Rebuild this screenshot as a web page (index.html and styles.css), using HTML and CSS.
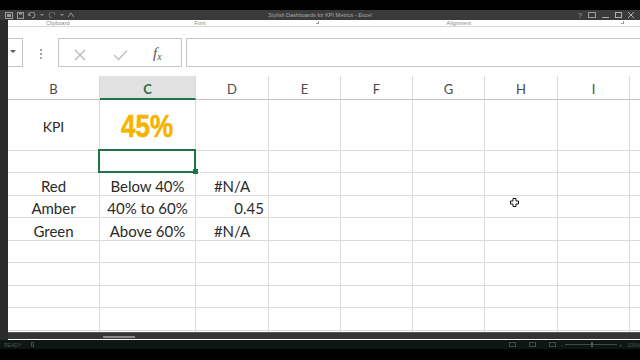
FILE: index.html
```html
<!DOCTYPE html>
<html lang="en">
<head>
    <meta charset="UTF-8">
    <meta name="viewport" content="width=device-width, initial-scale=1.0">
    <title>Stylish Dashboards for KPI Metrics - Excel</title>
    <link rel="stylesheet" href="styles.css">
</head>
<body>
    <div class="top-black"></div>

    <div class="titlebar">
        <div class="qat">
            <svg width="8" height="7" viewBox="0 0 8 7"><rect x="0.5" y="0.5" width="7" height="6" fill="none" stroke="#9a9a9a"/><rect x="2" y="2" width="4" height="3" fill="#9a9a9a"/></svg>
            <svg width="7" height="7" viewBox="0 0 7 7"><rect x="0.5" y="0.5" width="6" height="6" fill="none" stroke="#9a9a9a"/><rect x="2" y="0.5" width="3" height="2" fill="#9a9a9a"/></svg>
            <svg width="8" height="7" viewBox="0 0 8 7"><path d="M1 3 A3 3 0 1 1 4 6" fill="none" stroke="#9a9a9a"/><path d="M0 1 L1 4 L3 3" fill="none" stroke="#9a9a9a"/></svg>
            <span class="qat-caret"></span>
            <svg width="8" height="7" viewBox="0 0 8 7"><path d="M7 3 A3 3 0 1 0 4 6" fill="none" stroke="#6e6e6e"/></svg>
            <span class="qat-caret"></span>
            <svg width="6" height="7" viewBox="0 0 6 7"><path d="M0 5 L3 1 L6 5" fill="none" stroke="#9a9a9a"/></svg>
        </div>
        <div class="title">Stylish Dashboards for KPI Metrics - Excel</div>
        <div class="winbtns">
            <span class="wb">?</span>
            <svg width="8" height="6" viewBox="0 0 8 6"><rect x="0.5" y="0.5" width="7" height="5" fill="none" stroke="#9a9a9a"/></svg>
            <svg width="7" height="6" viewBox="0 0 7 6"><path d="M0 5.5 H7" stroke="#b0b0b0"/></svg>
            <svg width="7" height="6" viewBox="0 0 7 6"><rect x="0.5" y="0.5" width="6" height="5" fill="none" stroke="#b0b0b0"/></svg>
            <svg width="6" height="6" viewBox="0 0 6 6"><path d="M0 0 L6 6 M6 0 L0 6" stroke="#b0b0b0"/></svg>
        </div>
    </div>

    <div class="window">
        <div class="edge"></div>
        <div class="app">
            <div class="ribbon">
                <span class="group-label l-clip">Clipboard</span>
                <span class="group-label l-font">Font</span>
                <span class="launcher l-launch1"></span>
                <span class="group-label l-align">Alignment</span>
                <span class="launcher l-launch2"></span>
            </div>

            <div class="formula-bar">
                <div class="namebox"><span class="caret"></span></div>
                <div class="grip"><i></i><i></i><i></i></div>
                <div class="fx-buttons">
                    <svg class="btn-x" width="12" height="12" viewBox="0 0 12 12"><path d="M1 1 L11 11 M11 1 L1 11" stroke="#b9b9b9" stroke-width="1.4"/></svg>
                    <svg class="btn-ok" width="15" height="12" viewBox="0 0 15 12"><path d="M1 6 L5.5 10.5 L14 1.5" fill="none" stroke="#c3c3c3" stroke-width="1.6"/></svg>
                    <span class="btn-fx">f<sub>x</sub></span>
                </div>
                <div class="formula-input"></div>
            </div>

            <div class="sheet">
                <div class="row header">
                    <div class="cell">B</div>
                    <div class="cell active">C</div>
                    <div class="cell">D</div>
                    <div class="cell">E</div>
                    <div class="cell">F</div>
                    <div class="cell">G</div>
                    <div class="cell">H</div>
                    <div class="cell">I</div>
                    <div class="cell"></div>
                </div>
                <div class="row tall">
                    <div class="cell center kpi-label">KPI</div>
                    <div class="cell center"><span class="kpi-value">45%</span></div>
                    <div class="cell"></div><div class="cell"></div><div class="cell"></div>
                    <div class="cell"></div><div class="cell"></div><div class="cell"></div><div class="cell"></div>
                </div>
                <div class="row r22">
                    <div class="cell"></div>
                    <div class="cell selected"></div>
                    <div class="cell"></div><div class="cell"></div><div class="cell"></div>
                    <div class="cell"></div><div class="cell"></div><div class="cell"></div><div class="cell"></div>
                </div>
                <div class="row r23">
                    <div class="cell center">Red</div>
                    <div class="cell center">Below 40%</div>
                    <div class="cell center">#N/A</div>
                    <div class="cell"></div><div class="cell"></div><div class="cell"></div>
                    <div class="cell"></div><div class="cell"></div><div class="cell"></div>
                </div>
                <div class="row r22">
                    <div class="cell center">Amber</div>
                    <div class="cell center">40% to 60%</div>
                    <div class="cell right">0.45</div>
                    <div class="cell"></div><div class="cell"></div><div class="cell"></div>
                    <div class="cell"></div><div class="cell"></div><div class="cell"></div>
                </div>
                <div class="row r23">
                    <div class="cell center">Green</div>
                    <div class="cell center">Above 60%</div>
                    <div class="cell center">#N/A</div>
                    <div class="cell"></div><div class="cell"></div><div class="cell"></div>
                    <div class="cell"></div><div class="cell"></div><div class="cell"></div>
                </div>
                <div class="row r22">
                    <div class="cell"></div><div class="cell"></div><div class="cell"></div>
                    <div class="cell"></div><div class="cell"></div><div class="cell"></div>
                    <div class="cell"></div><div class="cell"></div><div class="cell"></div>
                </div>
                <div class="row r23">
                    <div class="cell"></div><div class="cell"></div><div class="cell"></div>
                    <div class="cell"></div><div class="cell"></div><div class="cell"></div>
                    <div class="cell"></div><div class="cell"></div><div class="cell"></div>
                </div>
                <div class="row r22">
                    <div class="cell"></div><div class="cell"></div><div class="cell"></div>
                    <div class="cell"></div><div class="cell"></div><div class="cell"></div>
                    <div class="cell"></div><div class="cell"></div><div class="cell"></div>
                </div>
                <div class="row r23">
                    <div class="cell"></div><div class="cell"></div><div class="cell"></div>
                    <div class="cell"></div><div class="cell"></div><div class="cell"></div>
                    <div class="cell"></div><div class="cell"></div><div class="cell"></div>
                </div>
                <div class="row r22">
                    <div class="cell"></div><div class="cell"></div><div class="cell"></div>
                    <div class="cell"></div><div class="cell"></div><div class="cell"></div>
                    <div class="cell"></div><div class="cell"></div><div class="cell"></div>
                </div>

                <!-- mouse pointer over the grid -->
                <svg class="pointer" width="9" height="9" viewBox="0 0 9 9"><path d="M3 0.5 H6 V3 H8.5 V6 H6 V8.5 H3 V6 H0.5 V3 H3 Z" fill="#fff" stroke="#111" stroke-width="1"/></svg>
            </div>

            <div class="hscroll"><span class="thumb"></span></div>
        </div>
    </div>

    <div class="statusbar">
        <span class="ready">READY</span>
        <span class="macro"></span>
        <div class="views">
            <span class="view"></span>
            <span class="view"></span>
            <span class="view"></span>
        </div>
        <div class="zoom">
            <span class="zsign">-</span>
            <span class="track"><span class="knob"></span></span>
            <span class="zsign">+</span>
            <span class="pct">100%</span>
        </div>
    </div>
</body>
</html>
```

FILE: styles.css
```css
* {
    box-sizing: border-box;
}
body {
    margin: 0;
    width: 640px;
    height: 360px;
    overflow: hidden;
    background-color: #000;
    font-family: "Lato", "Liberation Sans", sans-serif;
}
.top-black {
    height: 10px;
}

/* title bar */
.titlebar {
    height: 10px;
    background-color: #3a3a3a;
    display: flex;
    align-items: center;
}
.qat {
    width: 120px;
    display: flex;
    align-items: center;
    gap: 4px;
    padding-left: 5px;
}
.qat-caret {
    width: 0;
    height: 0;
    border-left: 2px solid transparent;
    border-right: 2px solid transparent;
    border-top: 2px solid #8a8a8a;
}
.title {
    flex: 1;
    text-align: center;
    font-family: "Liberation Sans", sans-serif;
    font-size: 5.5px;
    color: #a8a8a8;
    white-space: nowrap;
}
.winbtns {
    width: 120px;
    display: flex;
    align-items: center;
    justify-content: flex-end;
    gap: 6px;
    padding-right: 6px;
}
.wb {
    font-family: "Liberation Sans", sans-serif;
    font-size: 7px;
    color: #a8a8a8;
    line-height: 7px;
}

/* window */
.window {
    display: flex;
    height: 320px;
}
.edge {
    width: 8px;
    background-color: #2a2b2a;
}
.app {
    flex: 1;
    background-color: #fff;
    display: flex;
    flex-direction: column;
    overflow: hidden;
}

/* ribbon remnant */
.ribbon {
    height: 7px;
    border-bottom: 1px solid #d6d6d6;
    display: flex;
    align-items: flex-start;
}
.group-label {
    font-family: "Liberation Sans", sans-serif;
    font-size: 5.5px;
    line-height: 6px;
    color: #8a8a8a;
    white-space: nowrap;
}
.l-clip {
    margin-left: 38px;
}
.l-font {
    margin-left: 125px;
}
.launcher {
    width: 3px;
    height: 3px;
    border-right: 1px solid #999;
    border-bottom: 1px solid #999;
    margin-top: 1px;
}
.l-launch1 {
    margin-left: 110px;
}
.l-align {
    margin-left: 128px;
}
.l-launch2 {
    margin-left: 150px;
}

/* formula bar */
.formula-bar {
    display: flex;
    height: 29px;
    margin-top: 11px;
}
.namebox {
    width: 15px;
    border: 1px solid #c6c6c6;
    border-left: none;
    position: relative;
}
.caret {
    position: absolute;
    left: 2px;
    top: 11px;
    width: 0;
    height: 0;
    border-left: 3px solid transparent;
    border-right: 3px solid transparent;
    border-top: 3px solid #5c5c5c;
}
.grip {
    width: 35px;
    display: flex;
    flex-direction: column;
    align-items: center;
    justify-content: center;
    gap: 2px;
    padding-top: 3px;
}
.grip i {
    width: 2px;
    height: 2px;
    background-color: #a3a3a3;
}
.fx-buttons {
    width: 124px;
    border: 1px solid #c6c6c6;
    display: flex;
    align-items: center;
    padding-top: 4px;
}
.btn-x {
    margin-left: 15px;
}
.btn-ok {
    margin-left: 27px;
}
.btn-fx {
    margin-left: 25px;
    font-family: "Liberation Serif", serif;
    font-style: italic;
    font-size: 15px;
    color: #555;
    line-height: 15px;
}
.btn-fx sub {
    font-size: 10px;
    vertical-align: -2px;
}
.formula-input {
    flex: 1;
    margin-left: 4px;
    border: 1px solid #c6c6c6;
    border-right: none;
}

/* grid */
.sheet {
    margin-top: 9px;
    height: 256px;
    position: relative;
    overflow: hidden;
}
.row {
    display: grid;
    grid-template-columns: 92px 96px 73px 72px 72px 72px 73px 72px 72px;
}
.cell {
    border-right: 1px solid #dadada;
    border-bottom: 1px solid #dadada;
    display: flex;
    align-items: flex-end;
    padding: 0 4px 0;
    font-size: 15px;
    line-height: 18px;
    color: #2a2a2a;
    white-space: nowrap;
    position: relative;
}
.center {
    justify-content: center;
}
.right {
    justify-content: flex-end;
}
.header {
    height: 24px;
}
.header .cell {
    border-bottom: 1px solid #c3c3c3;
    justify-content: center;
    align-items: center;
    padding: 3px 0 0;
    font-size: 13px;
    color: #4a4a4a;
}
.header .cell.active {
    background-color: #e1e1e1;
    border-bottom: 2px solid #217346;
    color: #217346;
    font-weight: bold;
}
.tall {
    height: 51px;
}
.tall .cell {
    align-items: center;
    padding-top: 3px;
}
.r22 {
    height: 22px;
}
.r23 {
    height: 23px;
}
.kpi-label {
    font-size: 14px;
}
.kpi-value {
    display: inline-block;
    font-family: "Liberation Sans", sans-serif;
    font-weight: bold;
    font-size: 31px;
    line-height: 31px;
    color: #f6b400;
    transform: scaleX(0.84);
    -webkit-text-stroke: 0.6px #f6b400;
}
.selected::after {
    content: "";
    position: absolute;
    top: -2px;
    left: -2px;
    right: -1px;
    bottom: -1px;
    border: 2px solid #217346;
}
.selected::before {
    content: "";
    position: absolute;
    right: -3px;
    bottom: -2px;
    width: 5px;
    height: 5px;
    background-color: #217346;
    z-index: 1;
}
.pointer {
    position: absolute;
    left: 502px;
    top: 122px;
}

/* horizontal scroll strip */
.hscroll {
    height: 7px;
    background-color: #353535;
    border-top: 1px solid #555;
    position: relative;
}
.thumb {
    position: absolute;
    left: 95px;
    top: 3px;
    width: 32px;
    height: 2px;
    background-color: #8a8a8a;
}

/* status bar */
.statusbar {
    height: 9px;
    background-color: #0e1611;
    display: flex;
    align-items: center;
    padding-left: 4px;
    font-family: "Liberation Sans", sans-serif;
    font-size: 5px;
    color: #4a5a50;
}
.macro {
    width: 6px;
    height: 5px;
    border: 1px solid #3f4d45;
    margin-left: 10px;
}
.views {
    display: flex;
    gap: 13px;
    margin-left: 475px;
}
.view {
    width: 7px;
    height: 5px;
    border: 1px solid #3f4d45;
}
.zoom {
    display: flex;
    align-items: center;
    gap: 2px;
    margin-left: 6px;
}
.track {
    width: 52px;
    height: 1px;
    background-color: #3f4d45;
    position: relative;
}
.knob {
    position: absolute;
    left: 26px;
    top: -2px;
    width: 2px;
    height: 5px;
    background-color: #4f5f55;
}
.pct {
    margin-left: 3px;
}
```
